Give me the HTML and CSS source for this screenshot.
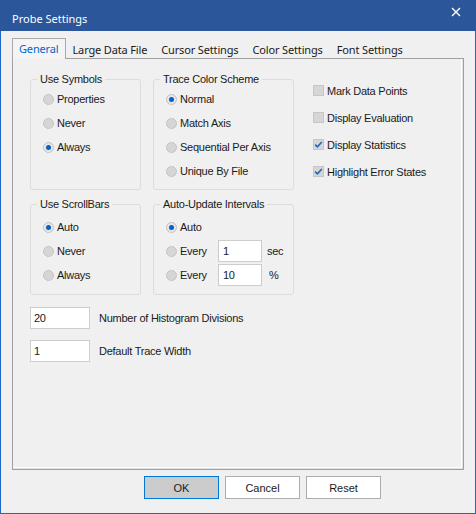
FILE: index.html
```html
<!DOCTYPE html>
<html lang="en">
<head>
    <meta charset="UTF-8">
    <title>Probe Settings</title>
    <link rel="stylesheet" href="styles.css">
</head>
<body>

<div class="window">
    <div class="titlebar">
        <span class="title">Probe Settings</span>
        <svg class="close" width="10" height="10" viewBox="0 0 10 10">
            <path d="M1 1L9 9M9 1L1 9" stroke="#fff" stroke-width="1.4" fill="none"/>
        </svg>
    </div>

    <div class="tabs">
        <div class="tab active">General</div>
        <div class="tab">Large Data File</div>
        <div class="tab">Cursor Settings</div>
        <div class="tab">Color Settings</div>
        <div class="tab">Font Settings</div>
    </div>

    <div class="panel">
        <div class="top">
            <div class="groups">
                <fieldset class="group">
                    <legend>Use Symbols</legend>
                    <div class="option"><span class="radio"></span>Properties</div>
                    <div class="option"><span class="radio"></span>Never</div>
                    <div class="option"><span class="radio checked"></span>Always</div>
                </fieldset>

                <fieldset class="group">
                    <legend>Trace Color Scheme</legend>
                    <div class="option"><span class="radio checked"></span>Normal</div>
                    <div class="option"><span class="radio"></span>Match Axis</div>
                    <div class="option"><span class="radio"></span>Sequential Per Axis</div>
                    <div class="option"><span class="radio"></span>Unique By File</div>
                </fieldset>

                <fieldset class="group lower">
                    <legend>Use ScrollBars</legend>
                    <div class="option"><span class="radio checked"></span>Auto</div>
                    <div class="option"><span class="radio"></span>Never</div>
                    <div class="option"><span class="radio"></span>Always</div>
                </fieldset>

                <fieldset class="group lower">
                    <legend>Auto-Update Intervals</legend>
                    <div class="option"><span class="radio checked"></span>Auto</div>
                    <div class="option">
                        <span class="radio"></span><span class="every">Every</span>
                        <div class="textbox small">1</div><span class="unit">sec</span>
                    </div>
                    <div class="option">
                        <span class="radio"></span><span class="every">Every</span>
                        <div class="textbox small">10</div><span class="unit pct">%</span>
                    </div>
                </fieldset>
            </div>

            <div class="checks">
                <div class="check"><span class="box"></span>Mark Data Points</div>
                <div class="check"><span class="box"></span>Display Evaluation</div>
                <div class="check">
                    <span class="box">
                        <svg width="11" height="11" viewBox="0 0 11 11"><path d="M2.2 5.6L4.4 7.8L8.8 3" stroke="#1a63c4" stroke-width="1.5" fill="none"/></svg>
                    </span>Display Statistics
                </div>
                <div class="check">
                    <span class="box">
                        <svg width="11" height="11" viewBox="0 0 11 11"><path d="M2.2 5.6L4.4 7.8L8.8 3" stroke="#1a63c4" stroke-width="1.5" fill="none"/></svg>
                    </span>Highlight Error States
                </div>
            </div>
        </div>

        <div class="fields">
            <div class="field-row">
                <div class="textbox">20</div>
                <span class="field-label">Number of Histogram Divisions</span>
            </div>
            <div class="field-row">
                <div class="textbox">1</div>
                <span class="field-label">Default Trace Width</span>
            </div>
        </div>
    </div>

    <div class="buttons">
        <button type="button" class="btn default">OK</button>
        <button type="button" class="btn">Cancel</button>
        <button type="button" class="btn">Reset</button>
    </div>
</div>

</body>
</html>
```

FILE: styles.css
```css
body {
    margin: 0;
    font-family: "Liberation Sans", Arial, sans-serif;
    font-size: 11px;
    letter-spacing: -0.25px;
    color: #1a1a1a;
    background: #f0f0f0;
}
.window {
    width: 476px;
    height: 514px;
    box-sizing: border-box;
    border: 1px solid #1c68c8;
    border-top: none;
    background: #f0f0f0;
}
.titlebar {
    height: 31px;
    margin: 0 -1px;
    padding: 0 15px 0 12px;
    display: flex;
    justify-content: space-between;
    align-items: flex-start;
    background: #2b579a;
    color: #fff;
    font-family: "Noto Sans", sans-serif;
    font-size: 11px;
    letter-spacing: 0;
}
.title {
    margin-top: 11px;
    line-height: 16px;
}
.close {
    margin-top: 7px;
}
.tabs {
    display: flex;
    align-items: flex-end;
    height: 19px;
    margin-top: 8px;
    padding-left: 11px;
    font-family: "Noto Sans", sans-serif;
    font-size: 11px;
    letter-spacing: -0.15px;
}
.tab {
    height: 17px;
    line-height: 17px;
    padding: 0 7px;
    color: #1a1a1a;
}
.tab.active {
    position: relative;
    z-index: 1;
    height: 20px;
    line-height: 20px;
    margin-bottom: -1px;
    padding: 0 6px;
    border: 1px solid #a9a9a9;
    border-bottom: none;
    background: #f4f4f4;
    color: #0066cc;
}
.panel {
    height: 412px;
    box-sizing: border-box;
    margin: 0 11px;
    padding: 14px 0 0 17px;
    border: 1px solid #a0a0a0;
    box-shadow: inset -1px -1px 0 #e0e0e0, inset -2px -2px 0 #fff;
}
.top {
    display: flex;
}
.groups {
    display: grid;
    grid-template-columns: 111px 141px;
    grid-template-rows: 117px 97px;
    column-gap: 12px;
    row-gap: 8px;
}
.group {
    box-sizing: border-box;
    height: 100%;
    min-width: 0;
    margin: 0;
    padding: 1px 0 0 12px;
    border: 1px solid #dcdcdc;
    border-radius: 3px;
}
.group.lower {
    padding-top: 4px;
}
.group legend {
    margin-left: -6px;
    padding: 0 3px;
    line-height: 13px;
}
.option {
    display: flex;
    align-items: center;
    height: 24px;
}
.radio {
    position: relative;
    width: 11px;
    height: 11px;
    box-sizing: border-box;
    margin-right: 3px;
    border: 1px solid #c4c4c4;
    border-radius: 50%;
    background: #d6d6d6;
}
.radio.checked {
    background: #e6e6e6;
}
.radio.checked::after {
    content: "";
    position: absolute;
    left: 2px;
    top: 2px;
    width: 5px;
    height: 5px;
    border-radius: 50%;
    background: #0a5fc4;
}
.every {
    width: 38px;
}
.textbox {
    box-sizing: border-box;
    width: 60px;
    height: 22px;
    padding: 3px 0 0 3px;
    line-height: 14px;
    border: 1px solid #cdcdcd;
    background: #fff;
}
.textbox.small {
    width: 44px;
    padding-left: 4px;
}
.unit {
    margin-left: 5px;
}
.unit.pct {
    margin-left: 7px;
}
.checks {
    margin: 4px 0 0 19px;
}
.check {
    display: flex;
    align-items: center;
    height: 27px;
}
.box {
    display: block;
    width: 11px;
    height: 11px;
    box-sizing: border-box;
    margin-right: 3px;
    border: 1px solid #c6c6c6;
    background: #d6d6d6;
}
.box svg {
    display: block;
    margin: -1px;
}
.fields {
    margin-top: 12px;
}
.field-row {
    display: flex;
    align-items: center;
    height: 22px;
    margin-bottom: 11px;
}
.field-label {
    margin-left: 9px;
}
.buttons {
    display: flex;
    gap: 6px;
    margin-top: 6px;
    padding-left: 143px;
}
.btn {
    width: 75px;
    height: 23px;
    padding: 0;
    border: 1px solid #adadad;
    background: #fff;
    font-family: "Liberation Sans", Arial, sans-serif;
    font-size: 11px;
    color: #1a1a1a;
}
.btn.default {
    border-color: #0078d7;
    background: #cccccc;
}
```
